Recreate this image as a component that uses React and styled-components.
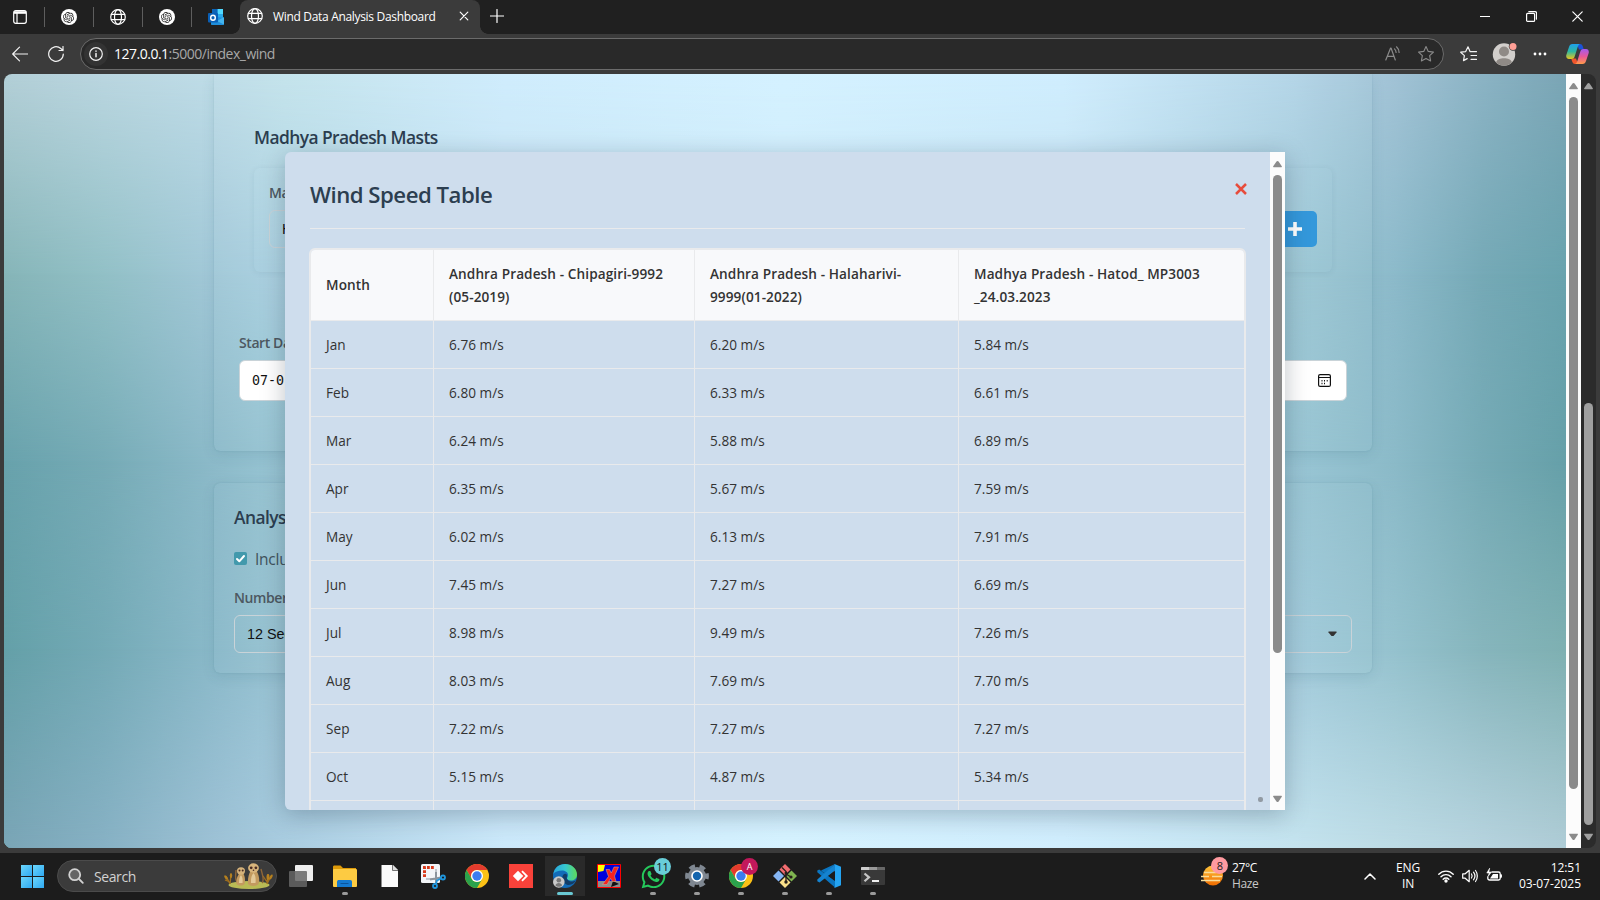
import React from "react";
import styled, { createGlobalStyle, css } from "styled-components";
import { SiOpenai } from "react-icons/si";
import { FaWhatsapp } from "react-icons/fa";

const ui = '"Open Sans", "Noto Sans", sans-serif';

const GlobalStyle = createGlobalStyle`
  * { box-sizing: border-box; }
  body { margin: 0; background: #1c1c1c; font-family: ${ui}; overflow: hidden; }
  svg { display: block; flex: none; }
`;

const Desktop = styled.div`
  width: 1600px;
  height: 900px;
  display: flex;
  flex-direction: column;
  background: #3b3b3b;
  overflow: hidden;
`;

/* ---------- tab strip ---------- */
const TabStrip = styled.header`
  height: 34px;
  flex: none;
  display: flex;
  align-items: center;
  background: #202020;
  color: #fff;
`;
const PinnedTab = styled.div`
  width: ${(p) => p.$w || 49}px;
  height: 32px;
  display: flex;
  align-items: center;
  justify-content: center;
`;
const TabDivider = styled.div`
  width: 1px;
  height: 20px;
  margin-right: -1px;
  background: #5e5e5e;
`;
const RoundLogo = styled.div`
  width: 16px;
  height: 16px;
  border-radius: 50%;
  background: #fff;
  color: #222;
  display: flex;
  align-items: center;
  justify-content: center;
`;
const ActiveTab = styled.div`
  position: relative;
  width: 240px;
  height: 34px;
  padding: 0 10px 2px 7px;
  display: flex;
  align-items: center;
  background: #3b3b3b;
  border-radius: 8px 8px 0 0;
  &::before, &::after {
    content: "";
    position: absolute;
    bottom: 0;
    width: 8px;
    height: 8px;
  }
  &::before { left: -8px; background: radial-gradient(circle at 0 0, transparent 7.5px, #3b3b3b 8px); }
  &::after { right: -8px; background: radial-gradient(circle at 100% 0, transparent 7.5px, #3b3b3b 8px); }
`;
const TabTitle = styled.span`
  flex: 1;
  margin-left: 10px;
  font-size: 12px;
  letter-spacing: -0.32px;
  white-space: nowrap;
`;
const NewTab = styled.div`
  margin: 0 auto 2px 10px;
`;
const WindowButton = styled.div`
  width: 46px;
  height: 34px;
  padding-bottom: 2px;
  display: flex;
  align-items: center;
  justify-content: center;
`;

/* ---------- toolbar ---------- */
const Toolbar = styled.div`
  height: 40px;
  flex: none;
  display: flex;
  align-items: center;
  color: #f2f2f2;
`;
const ToolButton = styled.div`
  width: ${(p) => p.$w}px;
  display: flex;
  justify-content: center;
`;
const AddressBar = styled.div`
  width: 1364px;
  height: 32px;
  margin-left: 4px;
  padding-left: 3px;
  display: flex;
  align-items: center;
  border: 1px solid #6b6b6b;
  border-radius: 16px;
  background: #292929;
`;
const SiteInfo = styled.div`
  width: 24px;
  height: 24px;
  border-radius: 50%;
  background: #333;
  display: flex;
  align-items: center;
  justify-content: center;
`;
const Address = styled.div`
  flex: 1;
  margin-left: 6px;
  padding-bottom: 1px;
  font-size: 14px;
  letter-spacing: -0.5px;
  color: #a8a8a8;
  b { font-weight: 400; color: #fff; }
`;

/* ---------- page ---------- */
const Viewport = styled.div`
  width: 1592px;
  height: 774px;
  flex: none;
  margin: 0 4px 5px;
  display: flex;
  overflow: hidden;
  border-radius: 8px;
`;
const Page = styled.main`
  position: relative;
  flex: 1;
  overflow: hidden;
  display: flex;
  flex-direction: column;
  align-items: stretch;
  padding: 0 194px 0 210px;
  isolation: isolate;
`;
const stops = [0, 100, 210, 280, 500, 780, 1060, 1290, 1390, 1480, 1560];
const SkyBand = styled.div`
  position: absolute;
  inset: 0;
  z-index: -1;
  background: linear-gradient(to right, ${(p) => p.$c.map((c, i) => `#${c} ${stops[i]}px`).join(", ")});
  ${(p) => p.$to > 0 && css`mask-image: linear-gradient(to bottom, transparent ${p.$from}px, #000 ${p.$to}px);`}
`;
const Panel = styled.section`
  height: ${(p) => p.$h}px;
  flex: none;
  border-radius: ${(p) => (p.$open ? "0 0 6px 6px" : "6px")};
  background: rgba(255, 255, 255, 0.02);
  box-shadow: 0 4px 14px rgba(20, 70, 90, 0.11), 0 0 2px rgba(20, 70, 90, 0.13);
  margin-bottom: 32px;
  padding: ${(p) => p.$pad};
`;
const Heading = styled.h3`
  margin: 0;
  font-size: 17.4px;
  line-height: 28px;
  font-weight: 600;
  letter-spacing: -0.57px;
  color: #2c3e50;
  white-space: nowrap;
`;
const MastBox = styled.div`
  height: 104px;
  margin: 17px 0 0;
  padding: 15px;
  border-radius: 6px;
  box-shadow: 0 1px 6px rgba(20, 70, 90, 0.08);
`;
const Label = styled.div`
  font-size: 14px;
  line-height: 20px;
  font-weight: 600;
  letter-spacing: -0.42px;
  color: #4d5861;
  white-space: nowrap;
`;
const FieldRow = styled.div`
  display: flex;
  align-items: center;
  justify-content: space-between;
  margin-top: 7px;
`;
const Field = styled.div`
  height: ${(p) => p.$h}px;
  width: ${(p) => p.$w || "100%"};
  padding: 0 ${(p) => p.$pr || 12}px 0 12px;
  display: flex;
  align-items: center;
  justify-content: space-between;
  border: 1px solid #c9d3d8;
  border-radius: 6px;
  background: ${(p) => (p.$solid ? "#fff" : "transparent")};
  color: #111;
  font: ${(p) => (p.$solid ? '13.33px "DejaVu Sans Mono", monospace' : '14.4px "Liberation Sans", sans-serif')};
`;
const AddButton = styled.div`
  width: 44px;
  height: 36px;
  border-radius: 5px;
  background: #3498db;
  display: flex;
  align-items: center;
  justify-content: center;
`;
const DateGroup = styled.div`
  margin: 61px 5px 0 -15px;
  width: 1108px;
`;
const CheckRow = styled.div`
  display: flex;
  align-items: center;
  gap: 8px;
  height: 24px;
  margin: 16px 0 17px;
  font-size: 15.5px;
  letter-spacing: -0.25px;
  color: #41535c;
`;
const CheckBox = styled.div`
  width: 13px;
  height: 13px;
  margin-top: -2px;
  border-radius: 2px;
  background: #4299ac;
`;

/* ---------- scroll bars ---------- */
const Track = styled.div`
  width: 15px;
  flex: none;
  display: flex;
  flex-direction: column;
  align-items: center;
  background: ${(p) => (p.$dark ? "#2b2b2b" : "#fcfcfc")};
  color: ${(p) => (p.$dark ? "#9f9f9f" : "#8b8b8b")};
  padding: 8px 0 7px;
`;
const Thumb = styled.div`
  width: 9px;
  height: ${(p) => p.$h}px;
  margin: ${(p) => p.$top}px 0 auto;
  border-radius: 5px;
  background: currentColor;
`;

/* ---------- modal ---------- */
const Modal = styled.div`
  position: absolute;
  left: 281px;
  top: 78px;
  width: 1000px;
  height: 658px;
  display: flex;
  border-radius: 6px 0 0 6px;
  background: #cedded;
  box-shadow: 0 5px 24px rgba(0, 20, 40, 0.25);
  overflow: hidden;
`;
const ModalBody = styled.div`
  flex: 1;
  padding: 25px 24px 0;
  overflow: hidden;
`;
const ModalHead = styled.div`
  display: flex;
  justify-content: space-between;
  height: 52px;
  margin: 0 1px 19px 1px;
  border-bottom: 1px solid #e9eaec;
`;
const ModalTitle = styled.h2`
  margin: 0;
  font-size: 22.2px;
  line-height: 35px;
  font-weight: 600;
  letter-spacing: -0.5px;
  color: #2c3e50;
`;
const Close = styled.div`
  width: 12px;
  height: 12px;
  margin: 6px -2px 0 0;
`;
const Table = styled.table`
  width: 937px;
  table-layout: fixed;
  border-collapse: separate;
  border-spacing: 0;
  border: 2px solid #e9eaec;
  border-radius: 6px 6px 0 0;
  overflow: hidden;
  color: #333;
`;
const cell = css`
  padding: 0 15px;
  text-align: left;
  border-bottom: 1px solid #e9eaec;
  border-right: 1px solid #e9eaec;
  &:last-child { border-right: 0; }
`;
const Th = styled.th`
  ${cell}
  height: 71px;
  background: #f8f9fb;
  font-size: 13.6px;
  line-height: 23px;
  font-weight: 600;
  letter-spacing: 0.1px;
  white-space: nowrap;
  &:first-child { padding-bottom: 2px; }
`;
const Td = styled.td`
  ${cell}
  height: 48px;
  font-size: 13.6px;
  letter-spacing: 0.02px;
`;
const CornerDot = styled.i`
  position: absolute;
  left: 1254px;
  top: 723px;
  width: 5px;
  height: 5px;
  border-radius: 2px;
  background: #929aa3;
`;

/* ---------- taskbar ---------- */
const Taskbar = styled.footer`
  height: 47px;
  flex: none;
  display: flex;
  align-items: center;
  padding-bottom: 1px;
  background: #1c1c1c;
  color: #fff;
`;
const StartButton = styled.div`
  margin: 0 13px 0 21px;
  display: grid;
  grid-template-columns: 11px 11px;
  gap: 1px;
  i { height: 11px; background: linear-gradient(135deg, #6bd6fb, #2fa9f2); }
`;
const SearchBox = styled.div`
  width: 220px;
  height: 32px;
  border-radius: 16px;
  border: 1px solid #4b4b4b;
  background: #3b3b3b;
  display: flex;
  align-items: center;
  padding: 0 3px 0 10px;
  font-size: 14px;
  letter-spacing: -0.4px;
  color: #d2d2d2;
  span { flex: 1; margin-left: 10px; }
`;
const Apps = styled.div`
  display: flex;
  margin-left: 2px;
`;
const AppSlot = styled.div`
  position: relative;
  width: 44px;
  height: 46px;
  display: flex;
  align-items: center;
  justify-content: center;
  background: ${(p) => (p.$active ? "linear-gradient(#2a2a2a, #2a2a2a) 50% 3px / 40px 40px no-repeat" : "none")};
  &::after {
    content: "";
    display: ${(p) => (p.$run ? "block" : "none")};
    position: absolute;
    bottom: 4px;
    width: ${(p) => (p.$active ? 16 : 6)}px;
    height: 3px;
    border-radius: 2px;
    background: ${(p) => (p.$active ? "#69c9d4" : "#9a9a9a")};
  }
`;
const Badge = styled.span`
  position: absolute;
  right: ${(p) => p.$r ?? 4}px;
  top: ${(p) => p.$t ?? 5}px;
  width: 17px;
  height: 17px;
  border-radius: 50%;
  display: flex;
  align-items: center;
  justify-content: center;
  font-size: ${(p) => p.$fs || 11}px;
  background: ${(p) => p.$bg};
  color: ${(p) => p.$fg};
`;
const Weather = styled.div`
  display: flex;
  align-items: center;
  gap: 7px;
  margin-left: 306px;
  position: relative;
`;
const Lines = styled.div`
  display: flex;
  flex-direction: column;
  text-align: ${(p) => p.$align || "left"};
  width: ${(p) => p.$w || "auto"};
  margin-left: ${(p) => p.$ml || 0}px;
  font-size: 12px;
  line-height: 16px;
  letter-spacing: ${(p) => p.$ls ?? -0.35}px;
  white-space: nowrap;
  small { font-size: 12px; color: #c8c8c8; }
`;
const Tray = styled.div`
  margin-left: auto;
  padding-right: 19px;
  display: flex;
  align-items: center;
`;
const TrayIcons = styled.div`
  display: flex;
  gap: 8px;
  margin: 0 15px 0 17px;
`;

const S = ({ w = 16, h, vb, children, ...p }) => (
  <svg width={w} height={h || w} viewBox={vb || `0 0 ${w} ${h || w}`} fill="none" stroke="currentColor" strokeWidth="1.2" strokeLinecap="round" strokeLinejoin="round" {...p}>{children}</svg>
);
const Globe = () => (
  <S><circle cx="8" cy="8" r="7.3" /><ellipse cx="8" cy="8" rx="3.5" ry="7.3" /><path d="M1.3 5.3h13.4M1.3 10.7h13.4" /></S>
);
const OpenAi = () => <RoundLogo><SiOpenai size={11} /></RoundLogo>;
const star = "M8 .6l2.25 4.8 5.2.7-3.8 3.6.95 5.2L8 12.400l-4.600 2.500.95-5.200L.550 6.100l5.200-.7z";

const Arrow = ({ down }) => (
  <svg width="9" height="8" viewBox="0 0 9 8"><path d={down ? "M.6.8h7.8c.5 0 .6.5.4.9L5.6 6.4c-.6.8-1.5.8-2.1 0L.2 1.7C0 1.3.1.8.6.8z" : "M.6 7.2h7.8c.5 0 .6-.5.4-.9L5.6 1.6c-.6-.8-1.5-.8-2.1 0L.2 6.3c-.2.4-.1.9.4.9z"} fill="currentColor" /></svg>
);
const ScrollBar = ({ dark, top, size }) => (
  <Track $dark={dark}><Arrow /><Thumb $top={top} $h={size} /><Arrow down /></Track>
);

const Chrome = () => (
  <svg width="24" height="24" viewBox="0 0 24 24">
    <circle cx="12" cy="12" r="12" fill="#fbc116" />
    <path d="M1.6 6A12 12 0 0 1 22.4 6H12a6 6 0 0 0-5.2 9z" fill="#e33b2e" />
    <path d="M1.6 6A12 12 0 0 0 12 24l5.2-9A6 6 0 0 1 6.8 15z" fill="#2ba24c" />
    <circle cx="12" cy="12" r="6" fill="#fff" /><circle cx="12" cy="12" r="4.7" fill="#3a7df0" />
  </svg>
);
const Copilot = () => (
  <svg width="23" height="22" viewBox="0 0 23 22">
    <defs>
      <linearGradient id="cpa" x1="0" y1="0" x2="0" y2="1"><stop offset="0" stopColor="#1ea0ee" /><stop offset=".5" stopColor="#2fb8a0" /><stop offset="1" stopColor="#e9c51e" /></linearGradient>
      <linearGradient id="cpb" x1="0" y1="0" x2="0" y2="1"><stop offset="0" stopColor="#a45af0" /><stop offset=".5" stopColor="#e8589a" /><stop offset="1" stopColor="#ff9a4a" /></linearGradient>
    </defs>
    <path d="M11 1h3c2 0 2.500 1.500 3 3l.8 2.500H13z" fill="#1b52d8" />
    <path d="M12 21H9c-2 0-2.500-1.500-3-3l-.8-2.500H10z" fill="#f0562c" />
    <path d="M6.500 1H14c-1.500.5-2 2-2.500 3.500L9 12.500c-.8 2.600-1.500 3.500-3.500 3.500H3C.8 16-.2 14.300.3 12L3 4C3.600 2.200 4.500 1 6.500 1z" fill="url(#cpa)" />
    <path d="M16.500 21H9c1.500-.5 2-2 2.500-3.500L14 9.500C14.800 6.900 15.500 6 17.500 6H20c2.200 0 3.200 1.700 2.700 4L20 18c-.6 1.800-1.500 3-3.500 3z" fill="url(#cpb)" />
  </svg>
);
const Outlook = () => (
  <svg width="16" height="16" viewBox="0 0 16 16">
    <path d="M4 0h11v10H4z" fill="#28a8ea" /><path d="M9.500 0H15v5H9.500z" fill="#50d9ff" /><path d="M4 0h5.500v5H4z" fill="#0c64b8" />
    <path d="M3 7l13 2v6c0 .6-.4 1-1 1H4c-.6 0-1-.4-1-1z" fill="#1f8fdc" /><path d="M16 8v7.500L9 12z" fill="#44b5ee" />
    <rect y="4" width="10" height="9.500" rx="1" fill="#0a5fb5" /><ellipse cx="5" cy="8.700" rx="2.300" ry="2.500" fill="none" stroke="#fff" strokeWidth="1.400" />
  </svg>
);
const Meerkats = () => (
  <svg width="49" height="26" viewBox="0 0 49 26">
    <ellipse cx="25" cy="22" rx="20.500" ry="4" fill="#b9bb55" />
    <g stroke="#a2701e" strokeWidth="1.300" fill="none"><path d="M6 21L2 13M6 21l1-9M6 19l-5-2M43 21l1-10M43 21l4-8M43 19l-4-6" /></g>
    <g fill="#b5801f"><ellipse cx="2" cy="14.500" rx="1.200" ry="2.500" transform="rotate(-35 2 14.500)" /><ellipse cx="7" cy="12.500" rx="1.200" ry="2.500" /><ellipse cx="44" cy="14" rx="1.500" ry="3" /><ellipse cx="47" cy="14" rx="1.200" ry="2.800" transform="rotate(25 47 14)" /></g>
    <path d="M14 20c-4-3-2-8-2-13M38 20c3-3 0-9-1-14" stroke="#8f6637" strokeWidth="1.400" fill="none" />
    <path d="M12.500 21c-.6-5 1-8 3-11h3.500c2 3 2.500 7 1.500 11-1.500 2-6 2-8 0zM24 21c-.5-6 1-10 2.500-13h6c2.500 4 3.500 9 2 13-2 2.500-8 2.500-10.500 0z" fill="#c39a5f" />
    <path d="M15 20c0-4 .5-6 2-8 1.500 2 2 5 1.500 8zM27 20c-.2-5 .6-8 2.500-10 2 2 2.500 6 2 10z" fill="#e3c998" />
    <ellipse cx="17" cy="8" rx="4" ry="3.700" fill="#d5b27a" /><ellipse cx="29.500" cy="5" rx="5.400" ry="4.700" fill="#d8b57c" />
    <g fill="#4b2d25"><circle cx="15.500" cy="7.500" r="1" /><circle cx="18.700" cy="7.500" r="1" /><circle cx="27.200" cy="4.800" r="1.400" /><circle cx="31.900" cy="4.800" r="1.400" /><circle cx="29.500" cy="7.300" r=".8" /></g>
  </svg>
);

const sky = [
  [0, "b3cfd7 bad6e0 bfdde8 c4e4ec d0edfd d5f2ff d0eefe b4d6e8 a2c3d6 8bb3c4 7ba6b6"],
  [200, "86b5b8 92c0c6 a2c8d8 abd2e2 c0e0f0 cdeafa c0e0f0 9ec8d6 8cbaca 75a9b6 69a3ae"],
  [387, "68a2ac 76abb6 8cbac9 99c6d5 b4d8e8 c4e2f0 b4d8e8 99c6d5 8bbac8 75aab5 66a0a9"],
  [574, "64a0a8 74aab6 8ab9c9 99c4d4 c0e0f0 cdeafa c0e0f0 a2cadb 95c2ce 86b5bc 7eb0b2"],
  [774, "7aa5b6 87b1c4 9dc1d5 a9cce0 cbe8fa d5f2ff d0edfd c4e3ee bddbe5 b6d3de afccd6"],
];
const columns = ["Month", "Andhra Pradesh - Chipagiri-9992\n(05-2019)", "Andhra Pradesh - Halaharivi-\n9999(01-2022)", "Madhya Pradesh - Hatod_ MP3003\n_24.03.2023"];
const rows = [
  ["Jan", "6.76", "6.20", "5.84"], ["Feb", "6.80", "6.33", "6.61"], ["Mar", "6.24", "5.88", "6.89"],
  ["Apr", "6.35", "5.67", "7.59"], ["May", "6.02", "6.13", "7.91"], ["Jun", "7.45", "7.27", "6.69"],
  ["Jul", "8.98", "9.49", "7.26"], ["Aug", "8.03", "7.69", "7.70"], ["Sep", "7.22", "7.27", "7.27"],
  ["Oct", "5.15", "4.87", "5.34"],
];

const Browser = () => (
  <>
    <TabStrip>
      <PinnedTab $w={40}><S w={14}><rect x=".7" y=".7" width="12.600" height="12.600" rx="2" /><path d="M1 2.500h12" strokeWidth="2.600" strokeLinecap="butt" /><path d="M4 3v10" /></S></PinnedTab>
      <PinnedTab $w={4} />
      <TabDivider /><PinnedTab><OpenAi /></PinnedTab>
      <TabDivider /><PinnedTab><Globe /></PinnedTab>
      <TabDivider /><PinnedTab><OpenAi /></PinnedTab>
      <TabDivider /><PinnedTab><Outlook /></PinnedTab>
      <ActiveTab>
        <Globe /><TabTitle>Wind Data Analysis Dashboard</TabTitle>
        <S w={12}><path d="M2.200 2.200l7.600 7.600M9.800 2.200l-7.600 7.600" /></S>
      </ActiveTab>
      <NewTab><S w={14}><path d="M7 .5v13M.5 7h13" /></S></NewTab>
      <WindowButton><S w={10}><path d="M0 5.500h10" /></S></WindowButton>
      <WindowButton><S w={11}><rect x=".6" y="2.400" width="8" height="8" rx="1" /><path d="M2.800.6H9c1 0 1.500.6 1.500 1.500v6" /></S></WindowButton>
      <WindowButton><S w={11}><path d="M.8.8l9.400 9.400M10.200.8L.8 10.200" /></S></WindowButton>
    </TabStrip>
    <Toolbar>
      <ToolButton $w={40}><S><path d="M15.500 8H.8M7.500 1.200L.7 8l6.800 6.800" /></S></ToolButton>
      <ToolButton $w={32}><S><path d="M15.300 8A7.300 7.300 0 1 1 12.800 2.500L15 4.500M15 .5v4h-4" /></S></ToolButton>
      <ToolButton $w={4} />
      <AddressBar>
        <SiteInfo><S w={14}><circle cx="7" cy="7" r="6.300" /><path d="M7 6.500v3.300M7 4v.3" strokeWidth="1.500" /></S></SiteInfo>
        <Address><b>127.0.0.1</b>:5000/index_wind</Address>
        <ToolButton $w={31}><S color="#8a8a8a"><path d="M.8 14L5.500 2.200h.6L10.300 14M2.300 10.300h6.800M9.500 2.800c1 1 1.600 2.300 1.600 3.700M11.500 .8a8 8 0 0 1 2.600 5.700" /></S></ToolButton>
        <ToolButton $w={35}><S color="#8a8a8a" strokeWidth="1.100"><path d={star} /></S></ToolButton>
      </AddressBar>
      <ToolButton $w={48}><S w={17} h={16}><path d="M10 5.600L8 .8 5.700 5.600l-5 .6 3.700 3.400-.9 5 3.700-2M10.500 5.700h6M11 9.500h5.500M11 13.300h5.500" /></S></ToolButton>
      <ToolButton $w={26}>
        <svg width="26" height="24" viewBox="0 0 26 24"><circle cx="12" cy="12.500" r="11.200" fill="#d2cfcc" /><circle cx="12" cy="9.500" r="5" fill="#8f8a86" /><path d="M4 20.300c1.500-5.500 14.500-5.500 16 0a11.200 11.200 0 0 1-16 0z" fill="#8f8a86" /><circle cx="21" cy="4.500" r="4.200" fill="#3b3b3b" /><circle cx="21" cy="4.500" r="3.500" fill="#ff9f96" /></svg>
      </ToolButton>
      <ToolButton $w={43}><svg width="14" height="4" viewBox="0 0 14 4" fill="#fff"><circle cx="2" cy="2" r="1.400" /><circle cx="7" cy="2" r="1.400" /><circle cx="12" cy="2" r="1.400" /></svg></ToolButton>
      <ToolButton $w={32}><Copilot /></ToolButton>
    </Toolbar>
  </>
);

const WindPage = () => (
  <Page>
    {sky.map(([y, c], i) => <SkyBand key={y} $c={c.split(" ")} $from={i ? sky[i - 1][0] : 0} $to={y} />)}
    <Panel $h={377} $open $pad="49px 40px 0">
      <Heading>Madhya Pradesh Masts</Heading>
      <MastBox>
        <Label>Mast</Label>
        <FieldRow><Field $h={38} $w="900px">Hatod</Field><AddButton><S w={14} color="#fff" strokeWidth="3.600" strokeLinecap="butt"><path d="M7 0v14M0 7h14" /></S></AddButton></FieldRow>
      </MastBox>
      <DateGroup>
        <Label>Start Date</Label>
        <FieldRow><Field $h={41} $solid $pr={15}>07-01<S w={13} strokeWidth="1.200"><rect x=".6" y=".6" width="11.800" height="11.800" rx="1.500" /><path d="M.6 3.500h11.800" /><path d="M3.500 6.800h1M6 6.800h1M8.700 6.800h1M3.500 9.500h1M6 9.500h1" strokeWidth="1.500" strokeLinecap="butt" /></S></Field></FieldRow>
      </DateGroup>
    </Panel>
    <Panel $h={190} $pad="20px 20px 0">
      <Heading>Analysis</Heading>
      <CheckRow><CheckBox><S w={13} color="#fff" strokeWidth="2"><path d="M3 7l2.300 2.300L10 4" /></S></CheckBox>Include</CheckRow>
      <Label>Number of</Label>
      <FieldRow><Field $h={38} $pr={14}>12 Sectors<svg width="9" height="6" viewBox="0 0 9 6"><path d="M.5.5h8v1L5.500 5h-2L.5 1.500z" fill="#333" /></svg></Field></FieldRow>
    </Panel>
    <Modal>
      <ModalBody>
        <ModalHead><ModalTitle>Wind Speed Table</ModalTitle><Close><S w={12} color="#e74c3c" strokeWidth="2.500" strokeLinecap="butt"><path d="M1 1l10 10M11 1L1 11" /></S></Close></ModalHead>
        <Table>
          <colgroup><col width="123" /><col width="261" /><col width="264" /><col width="285" /></colgroup>
          <thead><tr>{columns.map((c) => <Th key={c}>{c.split("\n").map((l) => <div key={l}>{l}</div>)}</Th>)}</tr></thead>
          <tbody>
            {rows.map(([m, ...v]) => <tr key={m}><Td>{m}</Td>{v.map((x, i) => <Td key={i}>{x} m/s</Td>)}</tr>)}
            <tr><Td /><Td /><Td /><Td /></tr>
          </tbody>
        </Table>
      </ModalBody>
      <ScrollBar top={7} size={478} />
    </Modal>
    <CornerDot />
  </Page>
);

const TaskbarView = () => (
  <Taskbar>
    <StartButton><i /><i /><i /><i /></StartButton>
    <SearchBox>
      <S w={16} strokeWidth="1.800"><circle cx="6.700" cy="6.700" r="5.500" fill="#666" /><path d="M11 11l3.800 3.800" /></S>
      <span>Search</span><Meerkats />
    </SearchBox>
    <Apps>
      <AppSlot><svg width="24" height="22" viewBox="0 0 24 22"><rect x="6" width="18" height="16" rx="1" fill="#eee" /><rect y="6" width="18" height="16" rx="1" fill="#666" fillOpacity=".85" /></svg></AppSlot>
      <AppSlot $run><svg width="24" height="22" viewBox="0 0 24 22"><path d="M0 2c0-1 .5-1.500 1.500-1.500h6L10 3h13v5H0z" fill="#dd9a09" /><rect y="4" width="24" height="18" rx="1" fill="#fdcb42" /><path d="M4 22v-5c0-1.500.8-2 2-2h11c1.500 0 2 .8 2 2v5z" fill="#1479cf" /><path d="M7.500 18.500h8" stroke="#0b549b" /></svg></AppSlot>
      <AppSlot><svg width="17" height="22" viewBox="0 0 17 22"><path d="M.5 0H12l5 5v17H.5z" fill="#fafafa" /><path d="M11.500 0v5.500H17" fill="#ddd" stroke="#555" strokeWidth=".8" /></svg></AppSlot>
      <AppSlot><svg width="25" height="25" viewBox="0 0 25 25"><rect width="19" height="19" rx="1.500" fill="#f2f5f8" /><path d="M3.500 13V3.500H14" fill="none" stroke="#d83b1c" strokeWidth="3" strokeDasharray="2.800 1.200" /><path d="M15 5v10H5" stroke="#c0c5cb" strokeWidth="2" fill="none" /><path d="M15 8v12M9 15.500l11-2" stroke="#8b949d" strokeWidth="2" /><g fill="none" stroke="#1f95dc" strokeWidth="1.800"><circle cx="22" cy="13.500" r="2" /><circle cx="14" cy="22" r="2" /><path d="M20 14.500l-4 2-1 3.500" /></g></svg></AppSlot>
      <AppSlot><Chrome /></AppSlot>
      <AppSlot><svg width="24" height="24" viewBox="0 0 24 24"><path d="M0 0h24v24H0z" fill="#f9423a" /><path d="M9 6.800l5.300 5.200L9 17.200 3.800 12z" fill="#fff" /><path d="M13 7.200l4.800 4.800-4.800 4.800" stroke="#fff" strokeWidth="1.800" fill="none" /></svg></AppSlot>
      <AppSlot $run $active>
        <svg width="24" height="24" viewBox="0 0 24 24"><defs><linearGradient id="ea" x1="0" x2="1"><stop offset="0" stopColor="#2aa6dc" /><stop offset=".5" stopColor="#36c8d0" /><stop offset="1" stopColor="#5edb59" /></linearGradient></defs>
          <circle cx="12" cy="12" r="12" fill="#136cb8" /><path d="M.3 10C1.500 3.500 6 0 12 0c7 0 12 5 12 10.500 0 4-3 6-6 6-2.500 0-4-1-4-2s1-1.500 1-3.500C15 8 12 6.500 9 6.500 5 6.500 2 8 .3 10z" fill="url(#ea)" /><path d="M14 12c-1 3 1.500 6 5.500 5.500 1.500-.2 2.500-.5 3.500-1.200C21 20 17 22 13.500 20.500 9 18.500 8 13.500 10.500 10.500c1.500-1.500 3.800-.7 3.500 1.500z" fill="#123d68" />
          <circle cx="5.800" cy="18" r="5.800" fill="#c9c9c9" /><circle cx="5.800" cy="16.300" r="2.300" fill="#777" /><path d="M2.500 21.500c0-3.500 6.500-3.500 6.500 0-1.500 1.700-5 1.700-6.500 0z" fill="#777" /></svg>
      </AppSlot>
      <AppSlot><svg width="24" height="24" viewBox="0 0 24 24"><path d="M.5.500h23v23H.5z" fill="#00d" /><path d="M1 17h22v6H1z" fill="#8d8d8d" /><path d="M1 1h7l-1.500 6L1 8z" fill="#ff0" /><path d="M14 23l8-3-6-3z" fill="#111" /><path d="M9 5.500h3.500l1.800 3.500L17 3h4.500l-4 9 1.500 5.500h-3.500l-2-3-3.500 6H5.500l6-8z" fill="#f6221f" stroke="#c9b8a0" strokeWidth=".5" /><path d="M.5.500h23v23H.5z" fill="none" stroke="#f00" /></svg></AppSlot>
      <AppSlot $run><FaWhatsapp size={27} color="#25c95c" /><Badge $bg="#69cdd8" $fg="#111">11</Badge></AppSlot>
      <AppSlot $run><svg width="24" height="24" viewBox="0 0 24 24"><circle cx="12" cy="12" r="9.800" fill="none" stroke="#7f8791" strokeWidth="4.200" strokeDasharray="5.700 4.560" strokeDashoffset="2.850" /><circle cx="12" cy="12" r="9" fill="#7f8791" /><circle cx="12" cy="12" r="5.800" fill="#fff" /><circle cx="12" cy="12" r="4.200" fill="#1565ae" /></svg></AppSlot>
      <AppSlot $run><Chrome /><Badge $bg="#c2185b" $fg="#fff" $fs={9} $r={5}>A</Badge></AppSlot>
      <AppSlot $run><svg width="24" height="24" viewBox="0 0 24 24"><path d="M12 0l5.500 5.500L12 11 6.500 5.500z" fill="#f36c70" /><path d="M5.500 6.500L11 12l-5.500 5.500L0 12z" fill="#86b6f5" /><path d="M12 13l5.500 5.500L12 24l-5.500-5.500z" fill="#fbe08a" /><path d="M18.500 6.500L24 12l-5.500 5.500L13 12z" fill="#7fb450" /><path d="M9 3.500l4 4v11M13 10l5 3" stroke="#271f1b" strokeWidth="1.300" fill="none" /><g fill="#271f1b"><circle cx="13" cy="9" r="1.500" /><circle cx="13" cy="18" r="1.700" /><circle cx="18" cy="13" r="1.600" /></g></svg></AppSlot>
      <AppSlot $run><svg width="24" height="24" viewBox="0 0 24 24"><path d="M17.500 0L24 2.800v18.400L17.500 24z" fill="#24a4f2" /><path d="M18 0L8 9.800 2.200 5.600.3 6.500v1.700L18 23.500V17L4 6.500" fill="#0b75c0" /><path d="M18 0v6.500L2.500 18.500.3 17.200v-1.700z" fill="#1583d0" /><path d="M18 7v10l-6.500-5z" fill="#1c1c1c" /></svg></AppSlot>
      <AppSlot $run><svg width="24" height="18" viewBox="0 0 24 18"><rect width="24" height="18" rx="1" fill="#393939" /><path d="M0 1c0-.6.400-1 1-1h15v3H0z" fill="#cecece" /><path d="M8 0h8v3H8z" fill="#999" /><path d="M16 0h7c.6 0 1 .4 1 1v2h-8z" fill="#686868" /><path d="M3.500 6.500L8 10.300l-4.500 4" stroke="#c5c5c5" strokeWidth="2.200" fill="none" /><path d="M11 14h7" stroke="#eee" strokeWidth="2" /></svg></AppSlot>
    </Apps>
    <Weather>
      <svg width="24" height="24" viewBox="0 0 24 24"><defs><linearGradient id="sun" x1="0" y1="0" x2="0" y2="1"><stop offset="0" stopColor="#ffc43a" /><stop offset="1" stopColor="#ef6c00" /></linearGradient></defs><circle cx="12" cy="11.500" r="10" fill="url(#sun)" /><path d="M3 8.500h12M0 12.500h8M11 12.500h10M0 16.500h19" stroke="#f8dc9a" strokeWidth="1.500" /></svg>
      <Badge $bg="#ff9aa0" $fg="#222" $r={30} $t={-3}>8</Badge>
      <Lines><span>27°C</span><small>Haze</small></Lines>
    </Weather>
    <Tray>
      <S w={12} h={8} strokeWidth="1.500"><path d="M1 7l5-5 5 5" /></S>
      <Lines $align="center" $w="26px" $ml={19} $ls={-0.2}><span>ENG</span><span>IN</span></Lines>
      <TrayIcons>
        <S strokeWidth="1.400"><path d="M.8 6.300c4-4.200 10.400-4.200 14.400 0M3 8.800c2.800-2.900 7.200-2.900 10 0M5.200 11.200c1.600-1.600 4-1.600 5.600 0" /><circle cx="8" cy="13" r="1" fill="currentColor" /></S>
        <S><path d="M.7 5.800h2.500L7.200 2.300v11.400L3.200 10.200H.7zM9.500 6c.8 1.200.8 2.800 0 4M11.500 4.200c1.700 2.200 1.700 5.400 0 7.600M13.500 2.500c2.400 3 2.400 8 0 11" /></S>
        <S strokeWidth="1.300"><path d="M6 4h6.500c1 0 1.700.7 1.700 1.700v4.600c0 1-.7 1.700-1.700 1.700h-9c-1 0-1.700-.7-1.700-1.700V9M15.300 7v2" /><path d="M7 6h5v4.500H4z" fill="currentColor" stroke="none" /><path d="M3.500.5L.8 5h2.500L2 8.500 5.500 4H3z" fill="currentColor" strokeWidth=".6" /></S>
      </TrayIcons>
      <Lines $align="right" $w="64px" $ls={-0.05}><span>12:51</span><span>03-07-2025</span></Lines>
    </Tray>
  </Taskbar>
);

export default function App() {
  return (
    <Desktop>
      <GlobalStyle />
      <Browser />
      <Viewport>
        <WindPage />
        <ScrollBar top={7} size={692} />
        <ScrollBar dark top={313} size={422} />
      </Viewport>
      <TaskbarView />
    </Desktop>
  );
}
